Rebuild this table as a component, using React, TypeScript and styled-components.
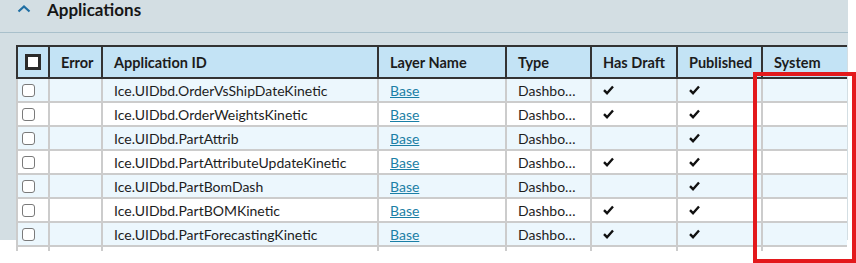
import React from 'react';
import styled, { createGlobalStyle } from 'styled-components';

const GlobalStyle = createGlobalStyle`
  html, body {
    margin: 0;
    padding: 0;
    background: #ffffff;
    font-family: 'Lato', 'Noto Sans', sans-serif;
    color: #1d1d1d;
  }
`;

const Page = styled.div`
  position: relative;
  width: 856px;
  height: 263px;
  overflow: hidden;
`;

const Panel = styled.section`
  width: 848px;
  height: 240px;
  background: #d3dee3;
`;

const Header = styled.div`
  display: flex;
  align-items: flex-start;
  height: 32px;
  padding-left: 17px;
  gap: 16px;
  border-bottom: 1px solid #a9c0cb;
`;

const Title = styled.h2`
  margin: 0;
  font-size: 17px;
  line-height: 19px;
  font-weight: 700;
  color: #161616;
`;

const Grid = styled.div`
  margin: 12px 0 0 16px;
  width: 831px;
  height: 206px;
  overflow: hidden;
`;

const Table = styled.table`
  border-collapse: collapse;
  table-layout: fixed;
  width: 831px;
  font-size: 14px;
`;

const Th = styled.th`
  height: 30px;
  padding: 0 0 0 11px;
  text-align: left;
  font-weight: 700;
  font-size: 14.5px;
  color: #1c1c1c;
  background: #c3e3f5;
  border: 2px solid #333333;
  white-space: nowrap;
`;

const Tr = styled.tr<{ $alt: boolean }>`
  background: ${(p) => (p.$alt ? '#ecf7fd' : '#ffffff')};
`;

const Td = styled.td`
  height: 22px;
  padding: 0 14px 0 11px;
  border: 2px solid #cccccc;
  border-top: none;
  white-space: nowrap;
  overflow: hidden;
  text-overflow: ellipsis;
  color: #1d1d1d;
`;

const BoxCell = styled(Td)`
  padding: 0 0 0 4px;
`;

const HeadBox = styled.span`
  display: block;
  width: 10px;
  height: 10px;
  border: 3px solid #2b2b2b;
  background: #fff;
  margin-left: -4px;
`;

const RowBox = styled.span`
  display: block;
  width: 11px;
  height: 11px;
  border: 1px solid #7a7a7a;
  border-radius: 3px;
  background: #fff;
`;

const Link = styled.a`
  color: #1b7fa6;
  text-decoration: underline;
`;

const Highlight = styled.div`
  position: absolute;
  left: 753px;
  top: 72px;
  width: 95px;
  height: 183px;
  border: 4px solid #e3191c;
`;

type Row = { id: string; draft: boolean };

const rows: Row[] = [
  { id: 'Ice.UIDbd.OrderVsShipDateKinetic', draft: true },
  { id: 'Ice.UIDbd.OrderWeightsKinetic', draft: true },
  { id: 'Ice.UIDbd.PartAttrib', draft: false },
  { id: 'Ice.UIDbd.PartAttributeUpdateKinetic', draft: true },
  { id: 'Ice.UIDbd.PartBomDash', draft: false },
  { id: 'Ice.UIDbd.PartBOMKinetic', draft: true },
  { id: 'Ice.UIDbd.PartForecastingKinetic', draft: true },
];

const widths = [32, 53, 276, 128, 85, 86, 85, 86];

const Chevron = () => (
  <svg width="14" height="9" viewBox="0 0 14 9" style={{ marginTop: 4 }}>
    <polyline points="1.5,7.5 7,2.5 12.5,7.5" fill="none" stroke="#1f6ea3" strokeWidth="2.2" />
  </svg>
);

const Check = () => (
  <svg width="11" height="10" viewBox="0 0 11 10" style={{ display: 'block' }}>
    <path d="M1 5.2 L4 8.2 L10 1.5" fill="none" stroke="#111" strokeWidth="2.4" />
  </svg>
);

const App: React.FC = () => (
  <>
    <GlobalStyle />
    <Page>
      <Panel>
        <Header>
          <Chevron />
          <Title>Applications</Title>
        </Header>
        <Grid>
          <Table>
            <colgroup>
              {widths.map((w, i) => (
                <col key={i} style={{ width: w }} />
              ))}
            </colgroup>
            <thead>
              <tr>
                <Th><HeadBox /></Th>
                <Th>Error</Th>
                <Th>Application ID</Th>
                <Th>Layer Name</Th>
                <Th>Type</Th>
                <Th>Has Draft</Th>
                <Th>Published</Th>
                <Th>System</Th>
              </tr>
            </thead>
            <tbody>
              {rows.map((r, i) => (
                <Tr key={r.id} $alt={i % 2 === 0}>
                  <BoxCell><RowBox /></BoxCell>
                  <Td />
                  <Td>{r.id}</Td>
                  <Td><Link>Base</Link></Td>
                  <Td>Dashboard</Td>
                  <Td>{r.draft && <Check />}</Td>
                  <Td><Check /></Td>
                  <Td />
                </Tr>
              ))}
              <Tr $alt={false}>
                {widths.map((_, i) => (
                  <Td key={i} />
                ))}
              </Tr>
            </tbody>
          </Table>
        </Grid>
      </Panel>
      <Highlight />
    </Page>
  </>
);

export default App;
